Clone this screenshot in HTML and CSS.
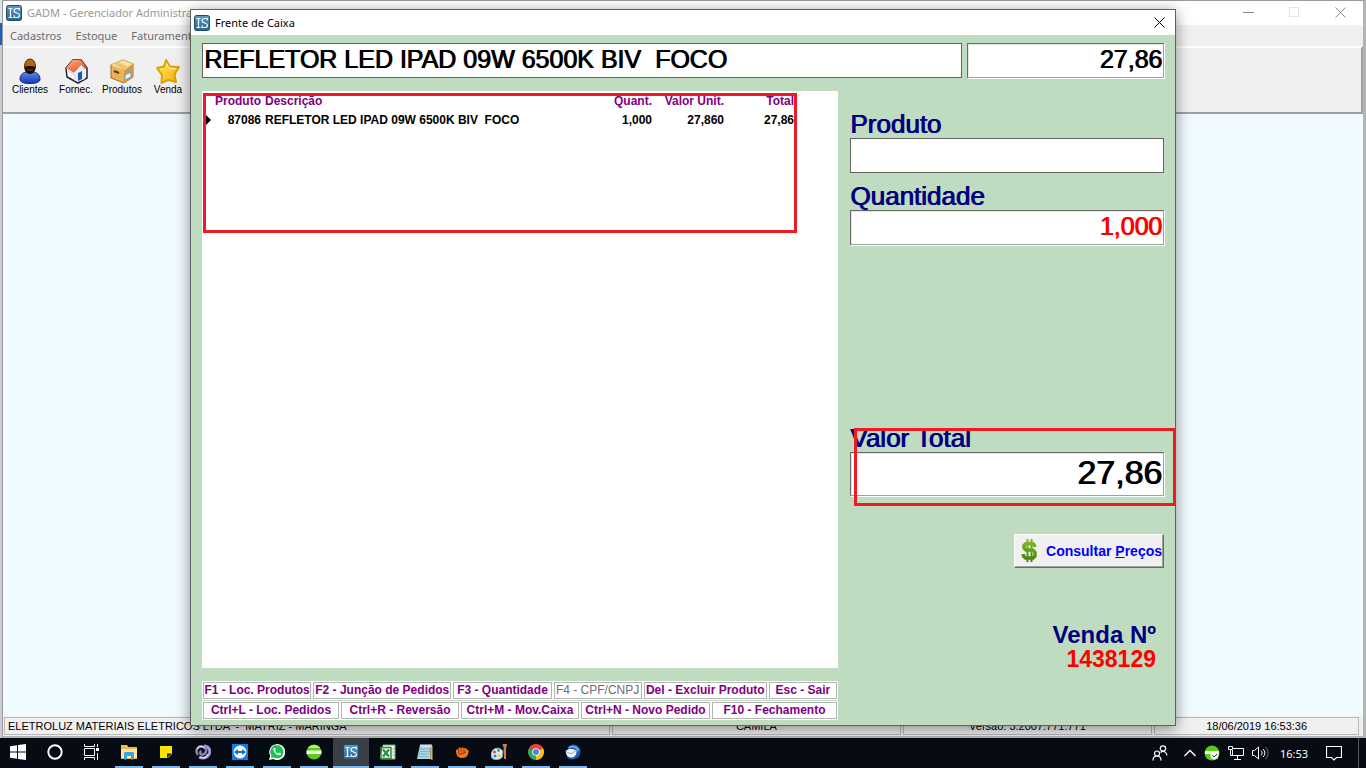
FILE: index.html
```html
<!DOCTYPE html>
<html lang="pt-BR">
<head>
<meta charset="utf-8">
<title>GADM - Gerenciador Administrativo</title>
<link rel="stylesheet" href="styles.css">
</head>
<body>
<svg class="defs" aria-hidden="true">
  <defs>
    <linearGradient id="gBlue" x1="0" y1="0" x2="0" y2="1"><stop offset="0" stop-color="#5b9bc4"/><stop offset="1" stop-color="#2b648f"/></linearGradient>
    <linearGradient id="gShirt" x1="0" y1="0" x2="0" y2="1"><stop offset="0" stop-color="#5b8be8"/><stop offset="1" stop-color="#1437b4"/></linearGradient>
    <linearGradient id="gStar" x1="0" y1="0" x2="1" y2="1"><stop offset="0" stop-color="#fff06a"/><stop offset="1" stop-color="#f5a800"/></linearGradient>
    <linearGradient id="gRoof" x1="0" y1="0" x2="1" y2="1"><stop offset="0" stop-color="#ffb48c"/><stop offset="1" stop-color="#e2440c"/></linearGradient>
    <linearGradient id="gDollar" gradientUnits="userSpaceOnUse" x1="0" y1="0" x2="0" y2="25"><stop offset="0" stop-color="#86c428"/><stop offset="1" stop-color="#3f7a10"/></linearGradient>
    <symbol id="is" viewBox="0 0 16 16">
      <rect x="0.5" y="0.5" width="15" height="15" rx="2" fill="url(#gBlue)" stroke="#1f4a6b"/>
      <path d="M2.5 3.5h4M4.5 3.5v9M2.5 12.500h4M13.200 5.500V3.500H11C8.800 3.500 8 4.500 8 5.700C8 8.700 13.500 7.300 13.500 10.300C13.500 11.800 12.500 12.500 10.800 12.500H8.200V10.300" fill="none" stroke="#fff" stroke-width="1.200"/>
    </symbol>
  </defs>
</svg>

<div class="desktop">
  <main class="app">
    <header class="app-title">
      <svg class="ic16"><use href="#is"/></svg>
      <h1>GADM - Gerenciador Administrativo - Versão: 3.2007.771.771</h1>
      <div class="caption-buttons">
        <button type="button" aria-label="Minimizar"><svg width="11" height="11"><path d="M0 5.500h11" stroke="#888"/></svg></button>
        <button type="button" aria-label="Maximizar" disabled><svg width="11" height="11"><rect x="0.500" y="0.500" width="9" height="9" fill="none" stroke="#e3e3e3"/></svg></button>
        <button type="button" aria-label="Fechar"><svg width="11" height="11"><path d="M0.500 0.500l10 10M10.500 0.500l-10 10" stroke="#888"/></svg></button>
      </div>
    </header>
    <nav class="menu">
      <button type="button">Cadastros</button>
      <button type="button">Estoque</button>
      <button type="button">Faturamento</button>
    </nav>
    <div class="toolbar">
      <button type="button">
        <svg width="24" height="26" viewBox="0 0 24 26"><path d="M2 21C2 16 6 14 9 14h6c3 0 7 2 7 7 0 3-3 4.500-10 4.500S2 24 2 21z" fill="url(#gShirt)" stroke="#14288c"/><ellipse cx="12" cy="8" rx="5.500" ry="7" fill="#b9670f" stroke="#5b2c05"/><path d="M6.500 9c2-1.500 9-1.500 11 0 0 4-2 7-5.500 7S6.500 13 6.500 9z" fill="#1d0d05"/><path d="M9.500 12h5" stroke="#8a5030"/></svg>
        <span>Clientes</span>
      </button>
      <button type="button">
        <svg width="24" height="26" viewBox="0 0 24 26"><path d="M2 10L9 2h8l6 8v10l-9 5-11-6z" fill="#f7f9ff" stroke="#222" stroke-width="1.500" stroke-linejoin="round"/><path d="M2 10l7-8h8l-6 10-1 3z" fill="url(#gRoof)"/><path d="M9 2h8l6 8-2 1-4-4-6 7-9-4z" fill="url(#gRoof)"/><path d="M11 14l6-6 4 4v9l-8 3z" fill="#e4ecfc"/><path d="M14 23v-8l4-2v8z" fill="#2456a8"/><path d="M4 13l7 4v6" fill="none" stroke="#c8cede"/></svg>
        <span>Fornec.</span>
      </button>
      <button type="button">
        <svg width="24" height="26" viewBox="0 0 24 26"><path d="M1 7l12-5 10 4v13l-9 6L1 20z" fill="#e7b25b" stroke="#a77018"/><path d="M1 7l12-5 10 4-9 6z" fill="#ffe1a0"/><path d="M14 12l9-6v13l-9 6z" fill="#d09a48"/><path d="M7 4l10 4v3l-3 1L4 6z" fill="#edc46e"/><path d="M4 13l5 2" stroke="#5b3a09" stroke-width="2"/><path d="M15 17l6-3v5l-6 3z" fill="#e9f4ff" stroke="#6f9ecb"/></svg>
        <span>Produtos</span>
      </button>
      <button type="button">
        <svg width="24" height="26" viewBox="0 0 24 26"><path d="M10 2l4 6.500 9 0.500-4.500 7.500 1.500 7.500-8-2-6.500 3 0.500-8L1 10l7-1.500z" fill="url(#gStar)" stroke="#e0a000" stroke-width="2" stroke-linejoin="round"/><path d="M10 5l3 5 7 1" fill="none" stroke="#fff8b8"/></svg>
        <span>Venda</span>
      </button>
    </div>
    <div class="workspace"></div>
    <footer class="status">
      <span class="st-company">ELETROLUZ MATERIAIS ELETRICOS LTDA  -  MATRIZ - MARINGA</span>
      <span>CAMILA</span>
      <span>Versão: 3.2007.771.771</span>
      <span>18/06/2019 16:53:36</span>
    </footer>
  </main>

  <section class="dialog" role="dialog" aria-labelledby="dlg-title">
    <header class="dialog-title">
      <svg class="ic16"><use href="#is"/></svg>
      <h2 id="dlg-title">Frente de Caixa</h2>
      <button type="button" aria-label="Fechar"><svg width="11" height="11"><path d="M0.500 0.500l10 10M10.500 0.500l-10 10" stroke="#000"/></svg></button>
    </header>
    <div class="dialog-body">
      <div class="current-item">
        <input class="box" type="text" aria-label="Item" value="REFLETOR LED IPAD 09W 6500K BIV  FOCO">
        <input class="box sunken" type="text" aria-label="Preço do item" value="27,86">
      </div>
      <div class="columns">
        <div class="left">
          <div class="grid-panel">
            <table class="items">
              <colgroup><col class="c-mark"><col class="c-code"><col><col class="c-qty"><col class="c-unit"><col class="c-total"></colgroup>
              <thead>
                <tr><th></th><th class="num">Produto</th><th>Descrição</th><th class="num">Quant.</th><th class="num">Valor Unit.</th><th class="num">Total</th></tr>
              </thead>
              <tbody>
                <tr><td class="mark"><svg width="6" height="10"><path d="M0 0l5 5-5 5z"/></svg></td><td class="num">87086</td><td>REFLETOR LED IPAD 09W 6500K BIV  FOCO</td><td class="num">1,000</td><td class="num">27,860</td><td class="num">27,86</td></tr>
              </tbody>
            </table>
            <div class="highlight highlight-items"></div>
          </div>
          <div class="shortcuts">
            <div class="row row-f">
              <button type="button">F1 - Loc. Produtos</button>
              <button type="button">F2 - Junção de Pedidos</button>
              <button type="button">F3 - Quantidade</button>
              <button type="button" disabled>F4 - CPF/CNPJ</button>
              <button type="button">Del - Excluir Produto</button>
              <button type="button">Esc - Sair</button>
            </div>
            <div class="row row-ctrl">
              <button type="button">Ctrl+L - Loc. Pedidos</button>
              <button type="button">Ctrl+R - Reversão</button>
              <button type="button">Ctrl+M - Mov.Caixa</button>
              <button type="button">Ctrl+N - Novo Pedido</button>
              <button type="button">F10 - Fechamento</button>
            </div>
          </div>
        </div>
        <form class="right">
          <div class="field">
            <label for="produto">Produto</label>
            <input class="box" id="produto" type="text">
          </div>
          <div class="field">
            <label for="quantidade">Quantidade</label>
            <input class="box sunken qty" id="quantidade" type="text" value="1,000">
          </div>
          <div class="field total">
            <label for="total">Valor Total</label>
            <input class="box sunken" id="total" type="text" value="27,86">
            <div class="highlight highlight-total"></div>
          </div>
          <button class="consult" type="button">
            <svg width="18" height="26" viewBox="0 0 18 26"><path d="M7.500 1v23M11.500 1v23" stroke="url(#gDollar)" stroke-width="2"/><path d="M14.500 9V7.500L13 5.500H6L4 7.500v2.500l2 2h7l2 2.500v3.500l-2 2H5.500L3.500 18v-2" fill="none" stroke="url(#gDollar)" stroke-width="3.500" stroke-linejoin="round"/></svg>
            <span>Consultar <u>P</u>reços</span>
          </button>
          <div class="sale">
            <div class="sale-label">Venda Nº</div>
            <div class="sale-number">1438129</div>
          </div>
        </form>
      </div>
    </div>
  </section>

  <nav class="taskbar">
    <button type="button" aria-label="Iniciar"><svg viewBox="0 0 16 16"><path d="M0 2.300l7-1V7.500H0zM8 1.100L16 0v7.500H8zM0 8.500h7v6.200l-7-1zM8 8.500h8V16l-8-1.100z" fill="#fff"/></svg></button>
    <button type="button" aria-label="Pesquisar"><svg viewBox="0 0 16 16"><circle cx="8" cy="8" r="6.700" fill="none" stroke="#fff" stroke-width="1.900"/></svg></button>
    <button type="button" aria-label="Visão de tarefas"><svg viewBox="0 0 16 16"><path d="M0.500 0v2.500h10V0M0.500 16v-2.500h10V16M0.500 4.500h10v7H0.500zM13.500 0v3M13.500 9v7" fill="none" stroke="#fff"/><path d="M12 4h3v3h-3z" fill="#fff"/></svg></button>
    <button type="button" class="open" aria-label="Explorador"><svg viewBox="0 0 16 16"><path d="M0 1h6l1.500 2H16v12H0z" fill="#f5b93e"/><path d="M0 5h16v9H0z" fill="#ffe69a"/><path d="M3 15.500V9.500C3 8.500 3.500 8 4.500 8h7c1 0 1.500 0.500 1.500 1.500v6h-3V12H6v3.500z" fill="#35a7e4"/></svg></button>
    <button type="button" class="open" aria-label="Notas"><svg viewBox="0 0 16 16"><path d="M2 2h12v8l-4 4H2z" fill="#ffe300"/><path d="M9 14V9.500h5z" fill="#222"/></svg></button>
    <button type="button" class="open" aria-label="Navegador"><svg viewBox="0 0 16 16"><path d="M9 2c5 0 7 5 5 8.500S8 15 4 13" fill="none" stroke="#a894dc" stroke-width="3"/><path d="M3 11C-1 6 4 1 8.500 3s2.500 7-0.500 7.500S4.500 8 6.500 7" fill="none" stroke="#8482a6" stroke-width="2.600"/><path d="M2 5c2-3.500 6-3 7.500-1M5 13c4 1.500 7 0 8-3" fill="none" stroke="#e2dcff" stroke-width="1.200"/></svg></button>
    <button type="button" class="open" aria-label="TeamViewer"><svg viewBox="0 0 16 16"><path d="M0 0h16v16H0z" fill="#0e7ee6"/><circle cx="8" cy="8" r="6.500" fill="#fff"/><path d="M1.800 8L6 5v2h4V5l4.200 3L10 11V9H6v2z" fill="#0e6ed0"/></svg></button>
    <button type="button" class="open" aria-label="WhatsApp"><svg viewBox="0 0 16 16"><path d="M0 16l1.200-4.200A8 8 0 1 1 4.300 15z" fill="#fff"/><path d="M1.800 14.300l0.700-2.700A6.600 6.600 0 1 1 4.600 13.500z" fill="#1fc352"/><path d="M4.500 4.200c1-1 1.500-0.500 2.200 1.200L6 6.500c0.700 1.500 1.800 2.500 3.200 3l1-1c1.800 0.700 2.200 1 1.500 2-2 2.500-8-2-7.200-6.300z" fill="#fff"/></svg></button>
    <button type="button" class="open" aria-label="Comunicador"><svg viewBox="0 0 16 16"><circle cx="8" cy="8" r="7.500" fill="#58cc18"/><path d="M2 4a7.500 7.500 0 0 1 12 0z" fill="#b9f07a"/><path d="M0.500 6.500h15v3.500h-15z" fill="#f3fbe9"/></svg></button>
    <button type="button" class="open active" aria-label="GADM"><svg><use href="#is"/></svg></button>
    <button type="button" class="open" aria-label="Planilha"><svg viewBox="0 0 16 16"><path d="M3 1h12v14H1L0 13z" fill="#f2faf0"/><path d="M3 1h12v14H1" fill="none" stroke="#75a873"/><path d="M1 3.500h10v11H1z" fill="none" stroke="#2d8d3f" stroke-width="1.500"/><path d="M3 5.500l6 7M9 5.500l-6 7" stroke="#2d8d3f" stroke-width="2.200"/><path d="M12.500 5H14M12.500 8H14M12.500 11H14" stroke="#75a873"/></svg></button>
    <button type="button" class="open" aria-label="Bloco de notas"><svg viewBox="0 0 16 16"><path d="M3 1h11l-1 14H0z" fill="#a9d6e5"/><path d="M13 15l1-14 1.500 1v14z" fill="#d3b36d"/><path d="M3 5h10M3 7.500h10M2 10h10M2 12.500h10" stroke="#7db4c8"/><path d="M4 0v3M6 0v3M8 0v3M10 0v3M12 0v3M14 0v3" stroke="#eee"/></svg></button>
    <button type="button" class="open" aria-label="Punho"><svg viewBox="0 0 16 16"><path d="M2 7c0-2 2-2 2-1 0-3 3-3 3-1 0-2 3-2 3 0 0-2 3-1 3 1 2-1 2 2 1 4-1 3-3 4-6 4S2 12 2 7z" fill="#f5781c"/><path d="M4.500 5v4M7 4.500v4M10 5v4M4 10c3 0 5 0 8-2" fill="none" stroke="#6c2204" stroke-width="0.800"/></svg></button>
    <button type="button" class="open" aria-label="Paint"><svg viewBox="0 0 16 16"><path d="M0.500 9c1-6 9-6 11-2 1 3-1 3 0 5 0 4-10 5-11 1-1-2 0-3 0-4z" fill="#d9edf9" stroke="#7dafcd"/><circle cx="3.500" cy="8" r="1.500" fill="#e34a32"/><circle cx="7.500" cy="6.500" r="1.400" fill="#45a93b"/><circle cx="4" cy="12" r="1.500" fill="#2c82d3"/><circle cx="8" cy="12" r="1.400" fill="#ffc02e"/><path d="M11.500 0h4.500l-1 5h-2z" fill="#bd8650"/><path d="M12.500 5h2.500v10h-2z" fill="#e27b22"/></svg></button>
    <button type="button" class="open" aria-label="Chrome"><svg viewBox="0 0 16 16"><path d="M8 8L1.070 4A8 8 0 0 1 14.930 4z" fill="#ea4335"/><path d="M8 8L14.930 4A8 8 0 0 1 8 16z" fill="#fbc116"/><path d="M8 8v8A8 8 0 0 1 1.070 4z" fill="#34a853"/><circle cx="8" cy="8" r="3.800" fill="#fff"/><circle cx="8" cy="8" r="3" fill="#4285f4"/></svg></button>
    <button type="button" class="open" aria-label="Thunderbird"><svg viewBox="0 0 16 16"><path d="M3 3C6-0.500 13-0.500 15 5c1.500 5-1 10-7 10.500C4 16 2 14 1.500 12z" fill="#1c58b0"/><path d="M0.500 7c3-3 8-2.500 11-0.500 0.500 4-2 7.500-6 7-3-0.500-4.500-3-5-6.500z" fill="#f1f5fa"/><path d="M1 7.500l5 2.500 5-3.500" fill="none" stroke="#93a6bd"/><path d="M4 4c3-2.500 8-2 9.500 3" fill="none" stroke="#64a8ec" stroke-width="2"/></svg></button>
    <div class="tray">
      <svg width="16" height="16"><g fill="none" stroke="#fff" stroke-width="1.200"><circle cx="11" cy="3.500" r="2.700"/><circle cx="5" cy="8.500" r="2.500"/><path d="M1 15.500c0-6 8-6 8 0M8.500 7.500c3-2.500 6-0.500 6.500 3"/></g></svg>
      <svg width="12" height="16"><path d="M0.500 11l5.500-5.500L11.500 11" fill="none" stroke="#fff" stroke-width="1.400"/></svg>
      <svg width="16" height="16"><circle cx="8" cy="8" r="7.500" fill="#58cc18"/><path d="M1 6h14v3H1z" fill="#e7f7da"/><circle cx="10.500" cy="10.500" r="4" fill="#f3f3f3"/><path d="M8.500 10.500l1.500 1.500 3-3" fill="none" stroke="#334"/></svg>
      <svg width="16" height="16"><path d="M5 3.500h10.500v7H4.500V5M9.500 10.500v4M6 14.500h7M0.500 1.500h4v3h-4zM2.500 4.500v6h2" fill="none" stroke="#fff"/></svg>
      <svg width="17" height="16"><path d="M0.500 5.500h2L6.500 2v12L2.500 10.500h-2zM9 5.500c1.500 1.500 1.500 3.500 0 5M11 4c2.500 2.500 2.500 5.500 0 8" fill="none" stroke="#fff"/><path d="M13.500 2c3.500 4 3.500 8 0 12" fill="none" stroke="#777"/></svg>
      <time>16:53</time>
      <svg width="16" height="16"><path d="M0.500 1.500h15v11h-5L8 15l-2.500-2.500h-5z" fill="none" stroke="#fff" stroke-width="1.200"/></svg>
    </div>
  </nav>
</div>
</body>
</html>
```
FILE: styles.css
```css
* { box-sizing: border-box; }
body { margin: 0; font-family: "Liberation Sans", Arial, sans-serif; font-size: 12px; }
h1, h2 { margin: 0; font-weight: 400; }
button { border: 0; padding: 0; margin: 0; background: none; font: inherit; color: inherit; white-space: nowrap; }
.defs { position: absolute; width: 0; height: 0; }
.ic16 { width: 16px; height: 16px; flex: none; }

.desktop {
  position: relative;
  display: flex;
  flex-direction: column;
  height: 100vh;
  overflow: hidden;
  background: linear-gradient(#dde3ea 23px, #1763b5 23px, #1763b5 45px, #c9cbd0 45px);
}

/* main window */
.app {
  flex: 1;
  display: flex;
  flex-direction: column;
  margin-left: 2px;
  border: 1px solid #9a9a9a;
  border-right: 3px solid #b4b4b4;
  border-bottom: 2px solid #b4b4b4;
  background: #f0f0f0;
}
.app-title {
  display: flex;
  align-items: center;
  height: 24px;
  padding-left: 3px;
  gap: 5px;
  background: #fff;
  color: #999;
  font-family: "Noto Sans", sans-serif;
}
.app-title h1 { flex: 1; font-size: 11px; line-height: 16px; white-space: nowrap; }
.caption-buttons { display: flex; }
.caption-buttons button { width: 46px; height: 24px; }
.menu {
  display: flex;
  align-items: center;
  gap: 14px;
  height: 21px;
  padding-left: 7px;
  color: #6d6d6d;
  font-family: "Noto Sans", sans-serif;
  font-size: 11px;
}
.toolbar {
  display: flex;
  height: 68px;
  padding: 10px 4px;
  border-top: 2px solid #fff;
  border-right: 2px solid #a0a0a0;
  border-bottom: 2px solid #a0a0a0;
}
.toolbar button {
  display: flex;
  flex-direction: column;
  align-items: center;
  justify-content: flex-start;
  width: 46px;
  font-size: 10px;
  line-height: 12px;
  color: #000;
}
.workspace { flex: 1; background: #f0fbff; }
.status {
  display: grid;
  grid-template-columns: 607fr 289fr 250fr 205fr;
  gap: 2px;
  padding: 1px 4px 1px 1px;
  color: #000;
  font-size: 11px;
}
.status span {
  height: 18px;
  min-width: 0;
  overflow: hidden;
  border: 1px solid #b8b8b8;
  line-height: 16px;
  text-align: center;
  white-space: pre;
}
.status .st-company { padding-left: 3px; text-align: left; }

/* sale window */
.dialog {
  position: absolute;
  top: 9px;
  right: 190px;
  bottom: 42px;
  left: 190px;
  display: flex;
  flex-direction: column;
  border: 1px solid #5f6360;
  background: #c0dcc0;
  box-shadow: 0 3px 14px rgba(0, 0, 0, 0.45);
}
.dialog-title {
  display: flex;
  align-items: center;
  flex: none;
  height: 25px;
  padding: 0 10px 0 3px;
  gap: 5px;
  background: #fff;
  font-family: "Noto Sans", sans-serif;
}
.dialog-title h2 { flex: 1; padding-bottom: 1px; font-size: 11px; }
.dialog-title button { display: flex; }
.dialog-body {
  flex: 1;
  display: flex;
  flex-direction: column;
  gap: 13px;
  padding: 8px 11px 5px;
}
.box {
  width: 100%;
  min-width: 0;
  height: 35px;
  padding: 0 1px 2px;
  border: 1px solid #646464;
  border-radius: 0;
  outline: 0;
  background: #fff;
  color: #000;
  font-family: inherit;
  font-size: 25px;
  text-shadow: 1px 0 currentColor;
}
.sunken {
  border-color: #696969 #a0a0a0 #a0a0a0 #696969;
  box-shadow: 1px 1px #fff, inset 1px 1px #e3e3e3;
  text-align: right;
}
.current-item { display: grid; grid-template-columns: 760fr 197fr; gap: 5px; }
.columns { flex: 1; display: flex; gap: 12px; }
.left { flex: 636; display: flex; flex-direction: column; gap: 13px; }
.right { flex: 314; display: flex; flex-direction: column; padding: 19px 0 49px; }
.grid-panel { position: relative; flex: 1; padding-top: 1px; background: #fff; }
.items {
  width: 594px;
  border-collapse: collapse;
  table-layout: fixed;
  font-weight: 700;
  white-space: pre;
}
.items th, .items td { padding: 0 2px; line-height: 18px; text-align: left; }
.items td { line-height: 20px; }
.items th { color: #800080; }
.items .num { text-align: right; }
.items .mark { padding: 0 4px; }
.mark svg { display: block; }
.c-mark { width: 11px; }
.c-code { width: 50px; }
.c-qty { width: 60px; }
.c-unit { width: 72px; }
.c-total { width: 70px; }
.highlight { position: absolute; border: 3px solid #ed1c24; pointer-events: none; }
.highlight-items { top: 2px; left: 1px; width: 594px; height: 140px; }
.highlight-total { top: 4px; right: -12px; left: 4px; height: 78px; }

.shortcuts { display: flex; flex-direction: column; gap: 1px; color: #800080; font-weight: 700; }
.row { display: grid; gap: 2px; padding: 1px; background: #fff; }
.row-f { grid-template-columns: 108fr 138fr 98fr 88fr 123fr 68fr; }
.row-ctrl { grid-template-columns: 136fr 118fr 118fr 129fr 125fr; }
.row button { min-width: 0; height: 17px; border: 1px solid #b4b4b4; line-height: 15px; }
.row button:disabled { color: #6d6d6d; font-weight: 400; }

.field { position: relative; margin-bottom: 9px; }
.field label {
  display: block;
  height: 28px;
  color: #000080;
  font-size: 26px;
  line-height: 28px;
  text-shadow: 1px 0 currentColor;
}
.field .box { display: block; }
.field .qty { color: #f00; }
.total { margin-top: auto; margin-bottom: 38px; }
.total .box { height: 44px; padding-bottom: 4px; font-size: 34px; }
.consult {
  display: flex;
  align-items: center;
  align-self: flex-end;
  gap: 8px;
  height: 34px;
  padding: 0 1px 0 5px;
  border: 1px solid;
  border-color: #fff #696969 #696969 #fff;
  box-shadow: inset -1px -1px #a0a0a0;
  background: #f0f0f0;
  color: #00f;
  font-size: 14px;
  font-weight: 700;
}
.sale { margin-top: 55px; padding-right: 8px; font-size: 24px; font-weight: 700; line-height: 24px; text-align: right; }
.sale-label { color: #000080; }
.sale-number { color: #f00; font-size: 23px; }

/* taskbar */
.taskbar { display: flex; flex: none; gap: 1px; height: 30px; background: #070b13; }
.taskbar button {
  display: flex;
  align-items: center;
  justify-content: center;
  width: 36px;
  border-bottom: 2px solid transparent;
}
.taskbar button svg { width: 16px; height: 16px; }
.taskbar .open { width: 28px; margin: 0 4px; border-bottom-color: #76b9ed; }
.taskbar .active { width: 36px; margin: 0; background: #3b3e44; }
.tray {
  display: flex;
  align-items: center;
  gap: 8px;
  margin-left: auto;
  margin-right: 7px;
  padding-right: 16px;
  border-right: 1px solid #555;
  color: #fff;
  font-family: "Noto Sans", sans-serif;
}
.tray svg:first-child { margin-right: 8px; }
.tray time { margin: 0 10px 0 3px; font-size: 11px; }
```
